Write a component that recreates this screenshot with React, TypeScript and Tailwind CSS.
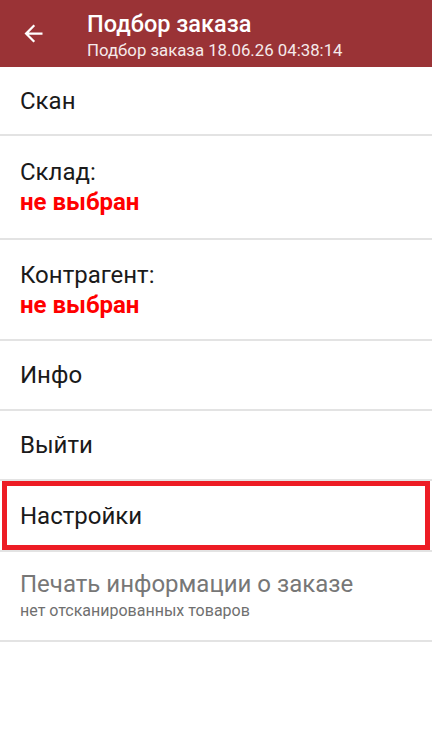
const font = { fontFamily: "Roboto, 'Liberation Sans', sans-serif" };

function Divider() {
  return <div className="h-[2px] bg-[#e3e3e3]" />;
}

function Row({ label, value, height }: { label: string; value?: string; height: string }) {
  return (
    <div className={`flex flex-col justify-center px-5 ${height}`}>
      <div className="text-[24px] leading-[30px] text-[#1a1a1a]">{label}</div>
      {value && (
        <div className="text-[24px] leading-[30px] font-bold text-[#ff0000]">{value}</div>
      )}
    </div>
  );
}

export default function App() {
  return (
    <div className="w-[432px] h-[740px] bg-white" style={font}>
      <header className="flex items-center h-[67px] bg-[#9a3336] text-white">
        <div className="w-[87px] flex justify-center pr-[20px]">
          <svg width="27" height="27" viewBox="0 0 24 24" fill="white">
            <path d="M20 11H7.83l5.59-5.59L12 4l-8 8 8 8 1.41-1.41L7.83 13H20v-2z" />
          </svg>
        </div>
        <div className="flex flex-col pt-[2px]">
          <span className="text-[23.5px] leading-[30px] font-medium">Подбор заказа</span>
          <span className="text-[16.8px] leading-[22px] text-[#f5eaea]">
            Подбор заказа 18.06.26 04:38:14
          </span>
        </div>
      </header>

      <Row label="Скан" height="h-[67px]" />
      <Divider />
      <Row label="Склад:" value="не выбран" height="h-[102px]" />
      <Divider />
      <Row label="Контрагент:" value="не выбран" height="h-[99px]" />
      <Divider />
      <Row label="Инфо" height="h-[68px]" />
      <Divider />
      <Row label="Выйти" height="h-[68px]" />
      <Divider />
      <div className="px-[2px] h-[69px]">
        <div className="h-full border-[5px] border-[#ed1c24] flex items-center pl-[13px]">
          <span className="text-[24px] text-[#1a1a1a]">Настройки</span>
        </div>
      </div>
      <Divider />
      <div className="flex flex-col justify-center px-5 h-[88px]">
        <div className="text-[24px] leading-[30px] text-[#777777]">Печать информации о заказе</div>
        <div className="text-[16px] leading-[24px] text-[#6f6f6f]">нет отсканированных товаров</div>
      </div>
      <Divider />
    </div>
  );
}
